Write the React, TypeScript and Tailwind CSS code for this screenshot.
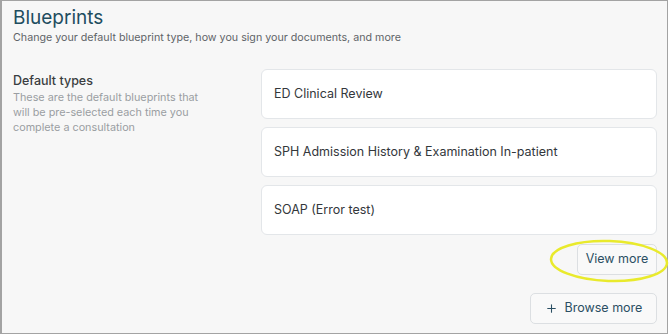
import { Plus } from "lucide-react";

const blueprints = [
  "ED Clinical Review",
  "SPH Admission History & Examination In-patient",
  "SOAP (Error test)",
];

export default function App() {
  return (
    <div className="w-[670px] h-[336px] bg-white" style={{ fontFamily: "Inter, 'Noto Sans', sans-serif" }}>
      <div className="relative w-[668px] h-[334px] bg-[#f7f7f7] border-t border-l-2 border-r border-b border-[#a3a3a3] pl-[11px] pr-[10px] pt-[5px]">
        <h1 className="text-[19px] leading-[24px] text-[#1e4d5f] font-normal">Blueprints</h1>
        <p className="text-[10.7px] leading-[16px] text-[#5f6468]">
          Change your default blueprint type, how you sign your documents, and more
        </p>

        <div className="flex mt-[23px]">
          <div className="w-[248px] pt-[4px]">
            <div className="text-[12.5px] leading-[16px] font-medium text-[#3a3d40]">Default types</div>
            <p className="mt-[1px] text-[10.8px] leading-[15px] text-[#9a9ea2] w-[200px]">
              These are the default blueprints that will be pre-selected each time you complete a consultation
            </p>
          </div>

          <div className="flex-1 flex flex-col">
            <div className="flex flex-col gap-[8px]">
              {blueprints.map((b) => (
                <div
                  key={b}
                  className="h-[50px] flex items-center px-[12px] bg-white border border-[#e3e6e9] rounded-[6px] text-[12.5px] text-[#33373b]"
                >
                  {b}
                </div>
              ))}
            </div>

            <div className="flex justify-end mt-[9px]">
              <button className="h-[31px] w-[80px] bg-[#f9f9f9] border border-[#dcdfe2] rounded-[5px] text-[12.5px] text-[#2b4f63]">
                View more
              </button>
            </div>

            <div className="flex justify-end mt-[18px]">
              <button className="h-[31px] w-[127px] flex items-center justify-center gap-[7px] bg-[#f9f9f9] border border-[#dcdfe2] rounded-[5px] text-[12.5px] text-[#2b4f63]">
                <Plus size={13} strokeWidth={2} />
                Browse more
              </button>
            </div>
          </div>
        </div>

        <svg className="absolute left-[546px] top-[236px] pointer-events-none" width="122" height="50" viewBox="0 0 122 50">
          <ellipse cx="61" cy="24" rx="58" ry="20" fill="none" stroke="#e9ea2c" strokeWidth="2.5" transform="rotate(2 61 24)" />
        </svg>
      </div>
    </div>
  );
}
